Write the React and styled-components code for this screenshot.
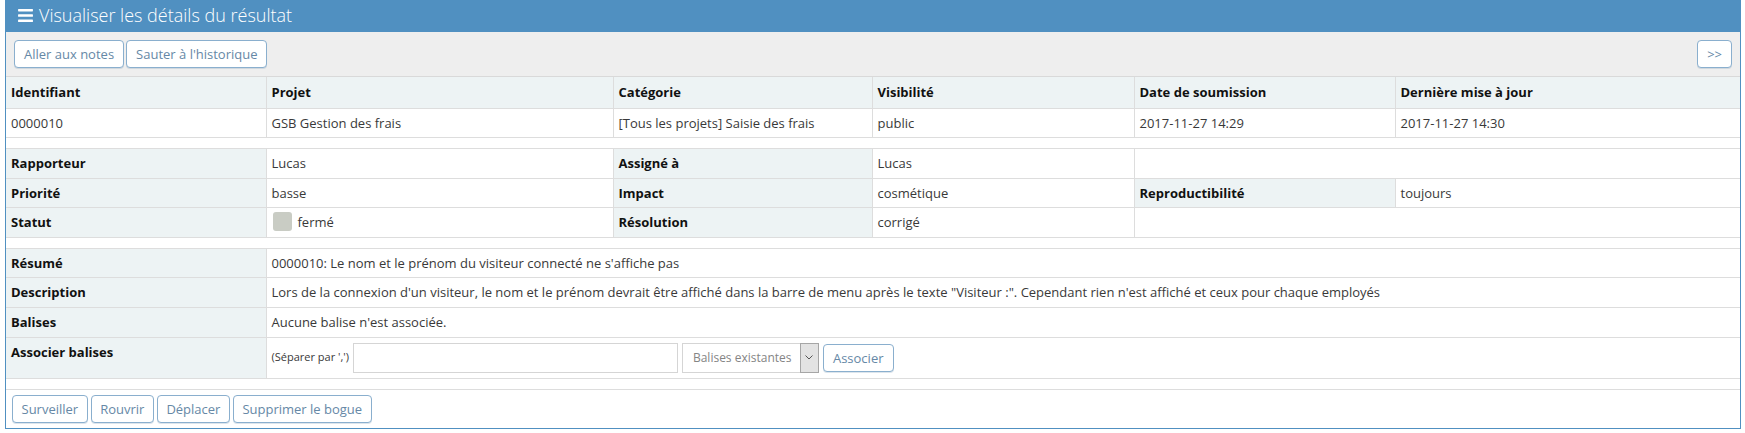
import React from 'react';
import styled, { createGlobalStyle } from 'styled-components';
import { FaBars } from 'react-icons/fa';

const GlobalStyle = createGlobalStyle`
  html, body {
    margin: 0;
    padding: 0;
    background: #fff;
  }
  body {
    font-family: 'Open Sans', 'Liberation Sans', sans-serif;
    font-size: 13px;
    color: #393939;
  }
`;

const Page = styled.div`
  padding: 0 4px 0 5px;
`;

const Widget = styled.div`
  border: 1px solid #5090c1;
  background: #fff;
`;

const WidgetHeader = styled.div`
  background: #5090c1;
  color: #fff;
  height: 31px;
  padding-left: 11px;
  display: flex;
  align-items: flex-start;
`;

const Title = styled.h4`
  margin: 0;
  font-size: 18px;
  font-weight: 300;
  line-height: 28px;
  display: flex;
  align-items: center;
  gap: 5px;

  svg {
    width: 17px;
    height: 17px;
  }
`;

const Toolbox = styled.div`
  background: #eeeeee;
  border-bottom: 1px solid #d9d9d9;
  padding: 8px 8px;
  display: flex;
  align-items: center;
`;

const ButtonGroup = styled.div`
  display: flex;
  gap: ${({ gap }) => gap || 2}px;
  margin-left: ${({ right }) => (right ? 'auto' : '0')};
`;

const Button = styled.button`
  font-family: inherit;
  font-size: 13px;
  height: 28px;
  padding: 0 ${({ narrow }) => (narrow ? 8.5 : 9)}px;
  background: #fff;
  color: #6688a6;
  border: 1px solid #8aafce;
  border-radius: 4px;
  box-shadow: 0 1px 0 rgba(120, 150, 180, 0.25);
  cursor: pointer;
  white-space: nowrap;
`;

const Table = styled.table`
  width: 100%;
  border-collapse: collapse;
  border-style: hidden;
  table-layout: fixed;
`;

const Cell = styled.td`
  border: 1px solid #dddddd;
  padding: ${({ tall }) => (tall ? '6px 5px' : '5px')};
  line-height: 18.57px;
  font-size: 13px;
  text-align: left;
  vertical-align: ${({ top }) => (top ? 'top' : 'middle')};
  color: #393939;
  white-space: nowrap;
  overflow: hidden;
`;

const Label = styled(Cell).attrs({ as: 'th' })`
  background: #edf3f4;
  font-weight: 700;
  color: #111;
`;

const SpacerCell = styled.td`
  height: 10px;
  padding: 0;
  border: 1px solid #dddddd;
`;

const StatusBox = styled.span`
  display: inline-block;
  width: 19px;
  height: 19px;
  border-radius: 3px;
  background: ${({ color }) => color};
  vertical-align: top;
  margin: -1px 6px -1px 1px;
`;

const TagForm = styled.div`
  display: flex;
  align-items: center;
  gap: 4px;
`;

const Hint = styled.span`
  font-size: 11px;
  color: #393939;
`;

const TextInput = styled.input`
  box-sizing: border-box;
  width: 325px;
  height: 30px;
  border: 1px solid #d5d5d5;
  background: #fff;
  padding: 5px 4px;
  font-family: inherit;
  font-size: 13px;
  outline: none;
`;

const Select = styled.div`
  box-sizing: border-box;
  width: 137px;
  height: 30px;
  border: 1px solid #d5d5d5;
  display: flex;
  align-items: stretch;
  background: #fff;
`;

const SelectText = styled.span`
  flex: 1;
  padding-left: 10px;
  line-height: 28px;
  color: #858585;
  font-size: 12px;
  white-space: nowrap;
`;

const SelectArrow = styled.span`
  width: 17px;
  background: #e3e3e3;
  border: 1px solid #a6a6a6;
  margin: -1px -1px -1px 0;
  display: flex;
  align-items: center;
  justify-content: center;

  svg {
    width: 8px;
    height: 5px;
  }
`;

const Footer = styled.div`
  border-top: 1px solid #dddddd;
  padding: 5px 6px;
  display: flex;
`;

const Spacer = () => (
  <tr>
    <SpacerCell colSpan={6} />
  </tr>
);

const columns = [260, 347, 259, 262, 261, 345];

export default function App() {
  return (
    <>
      <GlobalStyle />
      <Page>
        <Widget>
          <WidgetHeader>
            <Title>
              <FaBars />
              Visualiser les détails du résultat
            </Title>
          </WidgetHeader>

          <Toolbox>
            <ButtonGroup>
              <Button>Aller aux notes</Button>
              <Button>Sauter à l'historique</Button>
            </ButtonGroup>
            <ButtonGroup right>
              <Button>&gt;&gt;</Button>
            </ButtonGroup>
          </Toolbox>

          <Table>
            <colgroup>
              {columns.map((w, i) => (
                <col key={i} style={{ width: w }} />
              ))}
            </colgroup>
            <tbody>
              <tr>
                <Label tall>Identifiant</Label>
                <Label tall>Projet</Label>
                <Label tall>Catégorie</Label>
                <Label tall>Visibilité</Label>
                <Label tall>Date de soumission</Label>
                <Label tall>Dernière mise à jour</Label>
              </tr>
              <tr>
                <Cell>0000010</Cell>
                <Cell>GSB Gestion des frais</Cell>
                <Cell>[Tous les projets] Saisie des frais</Cell>
                <Cell>public</Cell>
                <Cell>2017-11-27 14:29</Cell>
                <Cell>2017-11-27 14:30</Cell>
              </tr>
              <Spacer />
              <tr>
                <Label>Rapporteur</Label>
                <Cell>Lucas</Cell>
                <Label>Assigné à</Label>
                <Cell>Lucas</Cell>
                <Cell colSpan={2} />
              </tr>
              <tr>
                <Label>Priorité</Label>
                <Cell>basse</Cell>
                <Label>Impact</Label>
                <Cell>cosmétique</Cell>
                <Label>Reproductibilité</Label>
                <Cell>toujours</Cell>
              </tr>
              <tr>
                <Label>Statut</Label>
                <Cell>
                  <StatusBox color="#c9ccc4" />
                  fermé
                </Cell>
                <Label>Résolution</Label>
                <Cell>corrigé</Cell>
                <Cell colSpan={2} />
              </tr>
              <Spacer />
              <tr>
                <Label>Résumé</Label>
                <Cell colSpan={5}>
                  0000010: Le nom et le prénom du visiteur connecté ne s'affiche pas
                </Cell>
              </tr>
              <tr>
                <Label>Description</Label>
                <Cell colSpan={5}>
                  Lors de la connexion d'un visiteur, le nom et le prénom devrait être affiché dans la
                  barre de menu après le texte "Visiteur :". Cependant rien n'est affiché et ceux pour
                  chaque employés
                </Cell>
              </tr>
              <tr>
                <Label>Balises</Label>
                <Cell colSpan={5}>Aucune balise n'est associée.</Cell>
              </tr>
              <tr>
                <Label top>Associer balises</Label>
                <Cell colSpan={5}>
                  <TagForm>
                    <Hint>(Séparer par ',')</Hint>
                    <TextInput type="text" />
                    <Select>
                      <SelectText>Balises existantes</SelectText>
                      <SelectArrow>
                        <svg viewBox="0 0 8 5" fill="none" stroke="#555" strokeWidth="1">
                          <path d="M0.5 0.5 L4 4 L7.5 0.5" />
                        </svg>
                      </SelectArrow>
                    </Select>
                    <Button>Associer</Button>
                  </TagForm>
                </Cell>
              </tr>
              <Spacer />
            </tbody>
          </Table>

          <Footer>
            <ButtonGroup gap={3}>
              <Button narrow>Surveiller</Button>
              <Button narrow>Rouvrir</Button>
              <Button narrow>Déplacer</Button>
              <Button narrow>Supprimer le bogue</Button>
            </ButtonGroup>
          </Footer>
        </Widget>
      </Page>
    </>
  );
}
